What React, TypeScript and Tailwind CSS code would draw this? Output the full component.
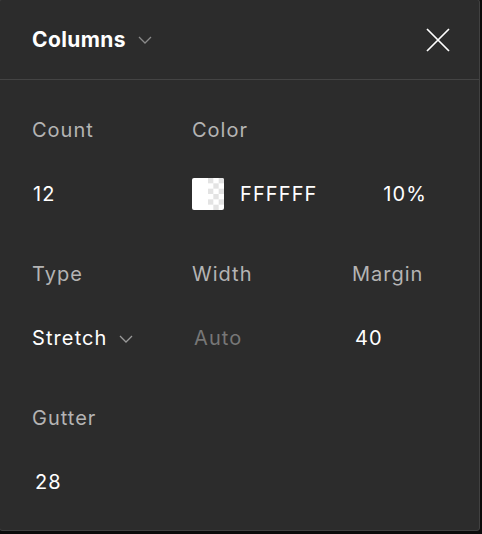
import React from "react";

function Chevron({ className }: { className?: string }) {
  return (
    <svg width="14" height="8" viewBox="0 0 14 8" className={className} fill="none">
      <path d="M1 1L7 7L13 1" stroke="currentColor" strokeWidth="1.3" />
    </svg>
  );
}

function Swatch() {
  const s = 16 / 3;
  const cells: React.ReactNode[] = [];
  for (let r = 0; r < 6; r++) {
    for (let c = 0; c < 3; c++) {
      if ((r + c) % 2 === 0) {
        cells.push(<rect key={`${r}-${c}`} x={16 + c * s} y={r * s} width={s} height={s} fill="#e3e3e3" />);
      }
    }
  }
  return (
    <svg width="32" height="32" viewBox="0 0 32 32" className="rounded-[2px] shrink-0">
      <rect x="0" y="0" width="32" height="32" fill="#ffffff" />
      {cells}
    </svg>
  );
}

function Label({ children }: { children: React.ReactNode }) {
  return <div className="h-[32px] flex items-center text-[20px] tracking-[1px] text-[#b4b4b4]">{children}</div>;
}

export default function App() {
  return (
    <div className="w-[482px] h-[534px] bg-[#0b0b0b] overflow-hidden" style={{ fontFamily: "Inter, 'Noto Sans', sans-serif" }}>
      <div className="-ml-px -mt-px w-[481px] h-[532px] bg-[#2c2c2c] border border-[#414141] rounded-[3px] flex flex-col">
        <div className="h-[80px] flex items-center justify-between pl-[32px] pr-[29px] border-b border-[#444444] shrink-0">
          <div className="flex items-center gap-[12px]">
            <span className="text-[21px] font-bold text-white tracking-[0.4px]">Columns</span>
            <Chevron className="text-[#8a8a8a] mt-[1px]" />
          </div>
          <svg width="24" height="24" viewBox="0 0 24 24" fill="none">
            <path d="M1 1L23 23M23 1L1 23" stroke="#ffffff" strokeWidth="1.7" />
          </svg>
        </div>
        <div className="pl-[32px] pt-[34px] flex flex-col text-[20px] tracking-[1.1px]">
          <div className="grid grid-cols-[160px_1fr]">
            <Label>Count</Label>
            <Label>Color</Label>
          </div>
          <div className="grid grid-cols-[160px_1fr] mt-[32px]">
            <div className="h-[32px] flex items-center text-white pl-[1px]">12</div>
            <div className="h-[32px] flex items-center text-white">
              <Swatch />
              <span className="ml-[16px]">FFFFFF</span>
              <span className="ml-auto mr-[52px]">10%</span>
            </div>
          </div>
          <div className="grid grid-cols-[160px_160px_1fr] mt-[48px]">
            <Label>Type</Label>
            <Label>Width</Label>
            <Label>Margin</Label>
          </div>
          <div className="grid grid-cols-[160px_160px_1fr] mt-[32px]">
            <div className="h-[32px] flex items-center text-white gap-[11px]">
              <span>Stretch</span>
              <Chevron className="text-[#9a9a9a] mt-[2px]" />
            </div>
            <div className="h-[32px] flex items-center text-[#777777] pl-[2px]">Auto</div>
            <div className="h-[32px] flex items-center text-white pl-[3px]">40</div>
          </div>
          <div className="mt-[48px]">
            <Label>Gutter</Label>
          </div>
          <div className="mt-[32px] h-[32px] flex items-center text-white pl-[3px]">28</div>
        </div>
      </div>
    </div>
  );
}
